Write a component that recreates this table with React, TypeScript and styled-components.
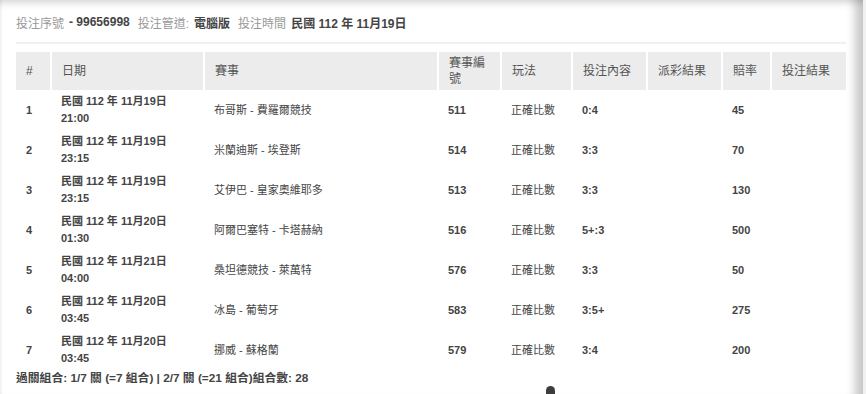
import React from 'react'
import styled, { createGlobalStyle } from 'styled-components'

const GlobalStyle = createGlobalStyle`
  html, body {
    margin: 0;
    padding: 0;
    background: #f1f1f1;
  }
  body {
    font-family: "Liberation Sans", "Noto Sans CJK TC", sans-serif;
    color: #444;
  }
`

type Bet = {
  no: number
  date: string
  time: string
  match: string
  code: string
  play: string
  pick: string
  odds: string
}

const bets: Bet[] = [
  { no: 1, date: '民國 112 年 11月19日', time: '21:00', match: '布哥斯 - 費羅爾競技', code: '511', play: '正確比數', pick: '0:4', odds: '45' },
  { no: 2, date: '民國 112 年 11月19日', time: '23:15', match: '米蘭迪斯 - 埃登斯', code: '514', play: '正確比數', pick: '3:3', odds: '70' },
  { no: 3, date: '民國 112 年 11月19日', time: '23:15', match: '艾伊巴 - 皇家奧維耶多', code: '513', play: '正確比數', pick: '3:3', odds: '130' },
  { no: 4, date: '民國 112 年 11月20日', time: '01:30', match: '阿爾巴塞特 - 卡塔赫納', code: '516', play: '正確比數', pick: '5+:3', odds: '500' },
  { no: 5, date: '民國 112 年 11月21日', time: '04:00', match: '桑坦德競技 - 萊萬特', code: '576', play: '正確比數', pick: '3:3', odds: '50' },
  { no: 6, date: '民國 112 年 11月20日', time: '03:45', match: '冰島 - 葡萄牙', code: '583', play: '正確比數', pick: '3:5+', odds: '275' },
  { no: 7, date: '民國 112 年 11月20日', time: '03:45', match: '挪威 - 蘇格蘭', code: '579', play: '正確比數', pick: '3:4', odds: '200' },
]

const columns = [
  { label: '#', width: 35 },
  { label: '日期', width: 153 },
  { label: '賽事', width: 234 },
  { label: '賽事編號', width: 63 },
  { label: '玩法', width: 71 },
  { label: '投注內容', width: 75 },
  { label: '派彩結果', width: 75 },
  { label: '賠率', width: 49 },
  { label: '投注結果', width: 75 },
]

export default function App() {
  return (
    <>
      <GlobalStyle />
      <Panel>
        <InfoBar>
          <Label>投注序號</Label>
          <Value>- 99656998</Value>
          <Label>投注管道:</Label>
          <Value>電腦版</Value>
          <Label>投注時間</Label>
          <Value>民國 112 年 11月19日</Value>
        </InfoBar>
        <Divider />
        <Table>
          <colgroup>
            {columns.map((c) => (
              <col key={c.label} width={c.width} />
            ))}
          </colgroup>
          <thead>
            <tr>
              {columns.map((c) => (
                <HeadCell key={c.label}>{c.label}</HeadCell>
              ))}
            </tr>
          </thead>
          <tbody>
            {bets.map((b) => (
              <Row key={b.no}>
                <Cell $bold>{b.no}</Cell>
                <Cell $bold>
                  <DateLine>{b.date}</DateLine>
                  <DateLine>{b.time}</DateLine>
                </Cell>
                <Cell>{b.match}</Cell>
                <Cell $bold>{b.code}</Cell>
                <Cell>{b.play}</Cell>
                <Cell $bold>{b.pick}</Cell>
                <Cell />
                <Cell $bold>{b.odds}</Cell>
                <Cell />
              </Row>
            ))}
          </tbody>
        </Table>
        <Summary>過關組合: 1/7 關 (=7 組合) | 2/7 關 (=21 組合)組合數: 28</Summary>
        <Knob />
      </Panel>
    </>
  )
}

const Panel = styled.div`
  position: relative;
  width: 863px;
  height: 394px;
  box-sizing: border-box;
  padding: 0 17px 0 16px;
  overflow: hidden;
  background: #fff;
  box-shadow:
    inset 0 8px 7px -5px rgba(0, 0, 0, 0.16),
    inset 3px 0 3px -2px rgba(0, 0, 0, 0.08),
    inset -16px 0 10px -8px rgba(0, 0, 0, 0.22);
`

const InfoBar = styled.div`
  display: flex;
  align-items: center;
  height: 42px;
  padding-top: 2px;
  box-sizing: border-box;
  font-size: 12px;
`

const Label = styled.span`
  color: #999;
  margin-right: 5px;
`

const Value = styled.span`
  color: #444;
  font-weight: bold;
  margin-right: 8px;
`

const Divider = styled.div`
  height: 2px;
  width: 830px;
  background: #f0f0f0;
`

const Table = styled.table`
  margin-top: 8px;
  width: 830px;
  table-layout: fixed;
  border-collapse: collapse;
  font-size: 11px;
`

const HeadCell = styled.th`
  height: 38px;
  padding: 0 10px;
  background: #ececec;
  color: #555;
  font-size: 12px;
  font-weight: normal;
  text-align: left;
  line-height: 16px;
  border-left: 2px solid #fff;
  &:first-child {
    border-left: none;
  }
`

const Row = styled.tr`
  height: 40px;
`

const Cell = styled.td<{ $bold?: boolean }>`
  padding: 0 10px;
  vertical-align: middle;
  color: #444;
  font-weight: ${(p) => (p.$bold ? 'bold' : 'normal')};
  line-height: 17px;
  white-space: nowrap;
`

const DateLine = styled.div``

const Summary = styled.div`
  font-size: 11.8px;
  font-weight: bold;
  color: #444;
  line-height: 16px;
`

const Knob = styled.div`
  position: absolute;
  left: 546px;
  top: 386px;
  width: 9px;
  height: 12px;
  border-radius: 5px 5px 0 0;
  background: #3d3d3d;
`
